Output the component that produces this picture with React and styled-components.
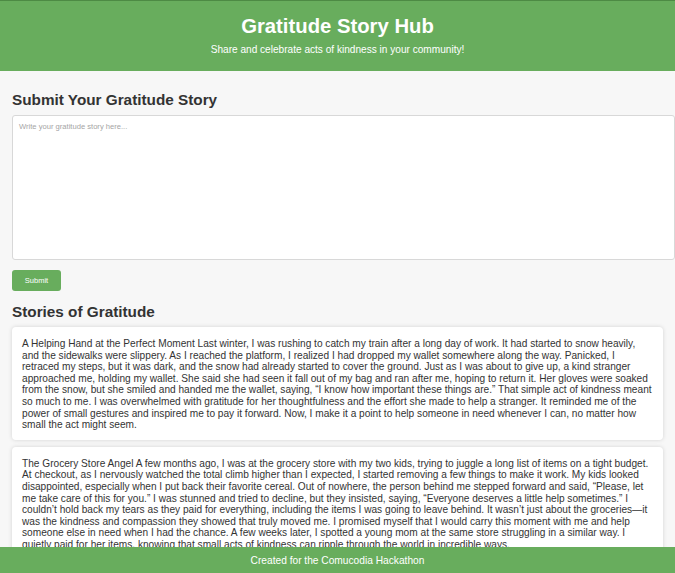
import React, { useState } from 'react'
import styled, { createGlobalStyle } from 'styled-components'

const stories = [
  'A Helping Hand at the Perfect Moment Last winter, I was rushing to catch my train after a long day of work. It had started to snow heavily, and the sidewalks were slippery. As I reached the platform, I realized I had dropped my wallet somewhere along the way. Panicked, I retraced my steps, but it was dark, and the snow had already started to cover the ground. Just as I was about to give up, a kind stranger approached me, holding my wallet. She said she had seen it fall out of my bag and ran after me, hoping to return it. Her gloves were soaked from the snow, but she smiled and handed me the wallet, saying, \u201cI know how important these things are.\u201d That simple act of kindness meant so much to me. I was overwhelmed with gratitude for her thoughtfulness and the effort she made to help a stranger. It reminded me of the power of small gestures and inspired me to pay it forward. Now, I make it a point to help someone in need whenever I can, no matter how small the act might seem.',
  'The Grocery Store Angel A few months ago, I was at the grocery store with my two kids, trying to juggle a long list of items on a tight budget. At checkout, as I nervously watched the total climb higher than I expected, I started removing a few things to make it work. My kids looked disappointed, especially when I put back their favorite cereal. Out of nowhere, the person behind me stepped forward and said, \u201cPlease, let me take care of this for you.\u201d I was stunned and tried to decline, but they insisted, saying, \u201cEveryone deserves a little help sometimes.\u201d I couldn\u2019t hold back my tears as they paid for everything, including the items I was going to leave behind. It wasn\u2019t just about the groceries\u2014it was the kindness and compassion they showed that truly moved me. I promised myself that I would carry this moment with me and help someone else in need when I had the chance. A few weeks later, I spotted a young mom at the same store struggling in a similar way. I quietly paid for her items, knowing that small acts of kindness can ripple through the world in incredible ways.',
]

export default function App() {
  const [text, setText] = useState('')
  return (
    <>
      <Global />
      <Header>
        <Title>Gratitude Story Hub</Title>
        <Tagline>Share and celebrate acts of kindness in your community!</Tagline>
      </Header>
      <Main>
        <SectionTitle>Submit Your Gratitude Story</SectionTitle>
        <StoryInput
          placeholder="Write your gratitude story here..."
          value={text}
          onChange={(e) => setText(e.target.value)}
        />
        <SubmitBtn>Submit</SubmitBtn>
        <SectionTitle>Stories of Gratitude</SectionTitle>
        <List>
          {stories.map((s, i) => (
            <Card key={i}>{s}</Card>
          ))}
        </List>
      </Main>
      <Footer>Created for the Comucodia Hackathon</Footer>
    </>
  )
}

const Global = createGlobalStyle`
  *, *::before, *::after { box-sizing: border-box; }
  body {
    margin: 0;
    background: #f7f7f7;
    font-family: "Liberation Sans", Arial, sans-serif;
    color: #333;
    overflow: hidden;
  }
`

const Header = styled.header`
  background: #68ad5d;
  border-top: 1px solid #4d8a44;
  color: #fff;
  text-align: center;
  height: 71px;
  padding-top: 13px;
`

const Title = styled.h1`
  margin: 0;
  font-size: 20.3px;
  font-weight: bold;
  line-height: 24px;
`

const Tagline = styled.p`
  margin: 5px 0 0;
  font-size: 10.1px;
  line-height: 13px;
`

const Main = styled.main`
  padding: 19px 12px 40px;
`

const SectionTitle = styled.h2`
  margin: 0 0 6px;
  font-size: 15.3px;
  line-height: 19px;
  font-weight: bold;
  color: #333;
`

const StoryInput = styled.textarea`
  display: block;
  width: calc(100% + 12px);
  height: 145px;
  padding: 6px 6px;
  border: 1px solid #d8d8d8;
  border-radius: 3px;
  background: #fff;
  font-family: "Liberation Sans", Arial, sans-serif;
  font-size: 7.6px;
  resize: none;
  outline: none;
  &::placeholder {
    color: #a5a5a5;
  }
`

const SubmitBtn = styled.button`
  display: block;
  margin: 10px 0 11px;
  width: 49px;
  height: 21px;
  border: none;
  border-radius: 3px;
  background: #68ad5d;
  color: #fff;
  font-family: "Liberation Sans", Arial, sans-serif;
  font-size: 7.5px;
  cursor: pointer;
`

const List = styled.div`
  display: flex;
  flex-direction: column;
  gap: 7px;
`

const Card = styled.div`
  background: #fff;
  border-radius: 4px;
  box-shadow: 0 0 4px rgba(0, 0, 0, 0.15);
  padding: 11px 10px 9px 10px;
  font-size: 10.15px;
  line-height: 11.6px;
  color: #333;
`

const Footer = styled.footer`
  position: fixed;
  left: 0;
  right: 0;
  bottom: 0;
  height: 26px;
  background: #68ad5d;
  color: #fff;
  font-size: 10.2px;
  display: flex;
  align-items: center;
  justify-content: center;
`
